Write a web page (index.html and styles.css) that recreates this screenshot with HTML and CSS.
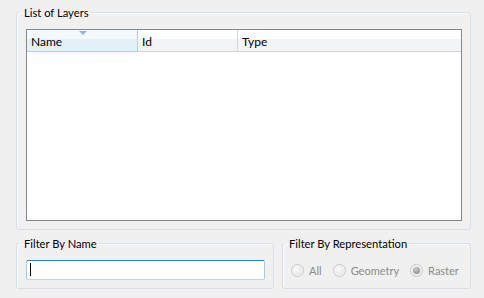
FILE: index.html
```html
<!DOCTYPE html>
<html>
<head>
<meta charset="utf-8">
<link rel="stylesheet" href="styles.css">
</head>
<body>
<div class="page">
  <fieldset class="group group-main">
    <legend>List of Layers</legend>
    <div class="table">
      <div class="thead">
        <div class="th th-name sorted"><span class="sort-arrow"></span>Name</div>
        <div class="th th-id">Id</div>
        <div class="th th-type">Type</div>
      </div>
      <div class="tbody"></div>
    </div>
  </fieldset>
  <div class="bottom-row">
    <fieldset class="group group-name">
      <legend>Filter By Name</legend>
      <div class="textbox"><span class="caret"></span></div>
    </fieldset>
    <fieldset class="group group-rep">
      <legend>Filter By Representation</legend>
      <div class="radios">
        <label class="radio"><span class="dot"></span>All</label>
        <label class="radio"><span class="dot"></span>Geometry</label>
        <label class="radio"><span class="dot checked"></span>Raster</label>
      </div>
    </fieldset>
  </div>
</div>
</body>
</html>
```
FILE: styles.css
```css
html, body {
  margin: 0;
  padding: 0;
  background: #f0f0f0;
}
body {
  font-family: Lato, "Noto Sans", "DejaVu Sans", sans-serif;
  font-size: 11.2px;
  color: #000;
  width: 484px;
  height: 298px;
  overflow: hidden;
}
.page {
  padding: 5px 0 0 16px;
  width: 455px;
}
.group {
  margin: 0;
  border: 1px solid #d5dfe5;
  border-radius: 3px;
  min-width: 0;
  box-shadow: inset 1px 1px 0 #fbfcfd;
}
.group legend {
  padding: 0 2px 0 5px;
  margin-left: -7px;
  line-height: 15px;
  white-space: nowrap;
}
.group-main {
  padding: 9px 8px 8px 9px;
}
.table {
  border: 1px solid #828790;
  background: #fff;
  height: 190px;
  display: flex;
  flex-direction: column;
}
.thead {
  display: flex;
  height: 22px;
  flex: none;
}
.th {
  position: relative;
  box-sizing: border-box;
  height: 22px;
  padding: 1px 0 0 4px;
  line-height: 21px;
  font-size: 12px;
  border-right: 1px solid #d5d5d5;
  border-bottom: 1px solid #d5d5d5;
  background: linear-gradient(#ffffff 0, #ffffff 9px, #f3f4f6 9px, #f3f4f6 100%);
}
.th-name { width: 111px; }
.th-id { width: 100px; }
.th-type { flex: 1; border-right: none; }
.th.sorted {
  border-right-color: #96d9f9;
  border-bottom-color: #96d9f9;
  background: linear-gradient(#f2f8fc 0, #f2f8fc 9px, #e3f0f8 9px, #e3f0f8 100%);
}
.sort-arrow {
  position: absolute;
  left: 52px;
  top: 1px;
  width: 0;
  height: 0;
  border-left: 4px solid transparent;
  border-right: 4px solid transparent;
  border-top: 4px solid #97b5d2;
}
.tbody { flex: 1; }

.bottom-row {
  display: flex;
  gap: 8px;
  margin-top: 6px;
}
.group-name {
  width: 239px;
  padding: 9px 8px 8px 9px;
  flex: none;
}
.textbox {
  box-sizing: border-box;
  height: 20px;
  width: 239px;
  background: #fff;
  border: 1px solid #b7d9ed;
  border-top-color: #3d7bad;
  border-left-color: #a4c9e3;
  border-right-color: #a4c9e3;
  border-radius: 2px;
  padding: 2px 0 0 3px;
}
.caret {
  display: block;
  width: 1px;
  height: 13px;
  background: #000;
}
.group-rep {
  flex: 1;
  padding: 9px 8px 8px 8px;
}
.radios {
  display: flex;
  align-items: center;
  height: 20px;
  gap: 11px;
  color: #8b8b8b;
  font-size: 11px;
}
.radio {
  display: flex;
  align-items: center;
  gap: 5px;
}
.dot {
  box-sizing: border-box;
  width: 13px;
  height: 13px;
  border-radius: 50%;
  border: 1px solid #c8c8c8;
  background: radial-gradient(circle at 40% 35%, #fbfbfb 0, #e6e6e6 70%, #dcdcdc 100%);
  position: relative;
  box-shadow: inset 0 0 0 1px #f4f4f4;
}
.dot.checked::after {
  content: "";
  position: absolute;
  left: 2px;
  top: 2px;
  width: 7px;
  height: 7px;
  border-radius: 50%;
  background: radial-gradient(circle at 40% 35%, #c8c8c8 0, #9a9a9a 70%, #8a8a8a 100%);
}
```
